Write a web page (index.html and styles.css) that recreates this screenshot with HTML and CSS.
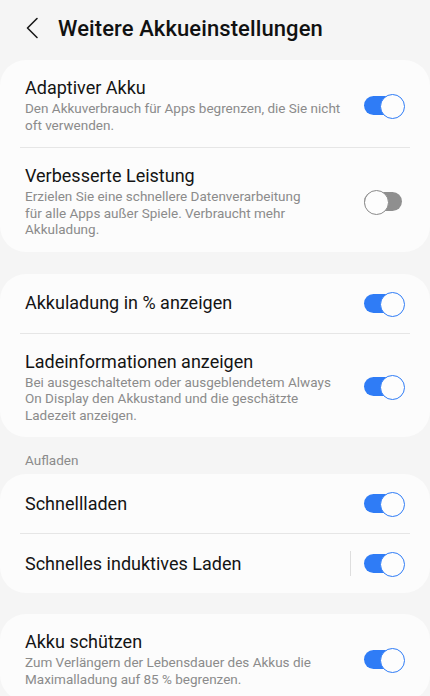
FILE: index.html
```html
<!DOCTYPE html>
<html lang="de">
<head>
    <meta charset="UTF-8">
    <meta name="viewport" content="width=device-width, initial-scale=1.0">
    <title>Weitere Akkueinstellungen</title>
    <link rel="stylesheet" href="styles.css">
</head>
<body>
    <header class="topbar">
        <svg class="back" width="14" height="22" viewBox="0 0 14 22">
            <path d="M12 1.5 L2.5 11 L12 20.5" fill="none" stroke="#1a1a1a" stroke-width="1.6" stroke-linecap="round" stroke-linejoin="round"/>
        </svg>
        <h1>Weitere Akkueinstellungen</h1>
    </header>

    <section class="card">
        <div class="row">
            <div class="text">
                <div class="title">Adaptiver Akku</div>
                <div class="desc">Den Akkuverbrauch für Apps begrenzen, die Sie nicht oft verwenden.</div>
            </div>
            <span class="switch on"></span>
        </div>
        <div class="row">
            <div class="text">
                <div class="title">Verbesserte Leistung</div>
                <div class="desc">Erzielen Sie eine schnellere Datenverarbeitung<br>für alle Apps außer Spiele. Verbraucht mehr Akkuladung.</div>
            </div>
            <span class="switch"></span>
        </div>
    </section>

    <section class="card">
        <div class="row single">
            <div class="text">
                <div class="title">Akkuladung in % anzeigen</div>
            </div>
            <span class="switch on"></span>
        </div>
        <div class="row">
            <div class="text">
                <div class="title">Ladeinformationen anzeigen</div>
                <div class="desc">Bei ausgeschaltetem oder ausgeblendetem Always On Display den Akkustand und die geschätzte Ladezeit anzeigen.</div>
            </div>
            <span class="switch on"></span>
        </div>
    </section>

    <div class="group-label">Aufladen</div>

    <section class="card tight">
        <div class="row single">
            <div class="text">
                <div class="title">Schnellladen</div>
            </div>
            <span class="switch on"></span>
        </div>
        <div class="row single">
            <div class="text">
                <div class="title">Schnelles induktives Laden</div>
            </div>
            <span class="vline"></span>
            <span class="switch on"></span>
        </div>
    </section>

    <section class="card">
        <div class="row">
            <div class="text">
                <div class="title">Akku schützen</div>
                <div class="desc">Zum Verlängern der Lebensdauer des Akkus die Maximalladung auf 85 % begrenzen.</div>
            </div>
            <span class="switch on"></span>
        </div>
    </section>
</body>
</html>
```

FILE: styles.css
```css
* {
    box-sizing: border-box;
    margin: 0;
    padding: 0;
}

body {
    font-family: Roboto, 'Noto Sans', sans-serif;
    background-color: #f5f5f5;
    color: #141414;
    width: 430px;
    height: 696px;
    overflow: hidden;
}

/* Header */
.topbar {
    display: flex;
    align-items: center;
    height: 56px;
    padding-left: 25px;
    gap: 19px;
}

.back {
    flex-shrink: 0;
}

.topbar h1 {
    font-size: 22px;
    font-weight: 500;
    color: #111;
    letter-spacing: 0.1px;
}

/* Cards */
.card {
    background-color: #fcfcfc;
    border-radius: 26px;
    margin-top: 4px;
    margin-bottom: 22px;
}

.card.tight {
    margin-top: 5px;
    margin-bottom: 21px;
}

.row {
    display: flex;
    align-items: center;
    padding: 17px 27px 14px 25px;
    position: relative;
}

.row + .row {
    border-top: 1px solid #e6e6e6;
    margin: 0 20px;
    padding-left: 5px;
    padding-right: 7px;
}

.row.single {
    padding-top: 18px;
    padding-bottom: 18px;
}

.text {
    flex: 1;
    max-width: 317px;
}

.title {
    font-size: 18px;
    line-height: 22px;
    color: #141414;
}

.desc {
    font-size: 13.5px;
    line-height: 16.5px;
    color: #8b8b8b;
    margin-top: 1px;
}

.group-label {
    font-size: 13.5px;
    line-height: 17px;
    color: #8b8b8b;
    padding: 0 0 0 25px;
    margin-top: -7px;
}

.vline {
    width: 1px;
    height: 25px;
    background-color: #dedede;
    margin: -2px 13px -2px auto;
}

/* Toggle switch */
.switch {
    position: relative;
    width: 39px;
    height: 23px;
    flex-shrink: 0;
    margin-left: auto;
}

.vline + .switch {
    margin-left: 0;
}

.switch::before {
    content: "";
    position: absolute;
    left: 0;
    right: 1px;
    top: 2px;
    height: 19px;
    border-radius: 10px;
    background-color: #8f8f8f;
}

.switch::after {
    content: "";
    position: absolute;
    top: 0;
    left: 0;
    width: 23px;
    height: 23px;
    border-radius: 50%;
    background-color: #fdfdfd;
    border: 1.5px solid #8a8a8a;
}

.switch.on::before {
    background-color: #2f7cf6;
}

.switch.on::after {
    left: 16px;
    border-color: #2f7cf6;
}
```
